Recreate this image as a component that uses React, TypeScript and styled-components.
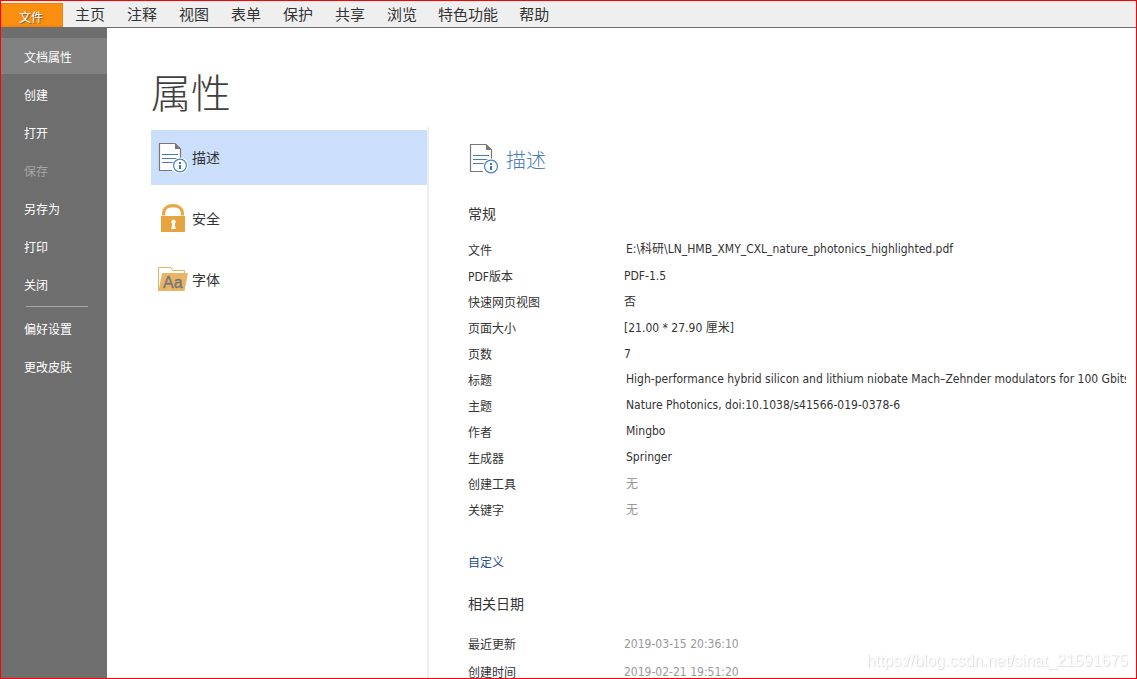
import React from "react";
import styled, { createGlobalStyle } from "styled-components";

const GlobalStyle = createGlobalStyle`
  *, *::before, *::after { box-sizing: border-box; }
  body {
    margin: 0;
    background: #fff;
    color: #333;
    font: 12px/16px "DejaVu Sans Condensed", "Noto Sans CJK SC", sans-serif;
  }
  button { font-family: inherit; border: 0; background: none; padding: 0; text-align: left; cursor: pointer; }
  h1, h2, h3, ul { margin: 0; padding: 0; font-weight: 400; list-style: none; }
`;

const Window = styled.div`
  height: 100vh;
  display: flex;
  flex-direction: column;
  overflow: hidden;
  border: 1px solid #f00;
`;

const MenuBar = styled.nav`
  flex: none;
  display: flex;
  align-items: stretch;
  height: 27px;
  padding-top: 2px;
  background: #efefef;
  border-bottom: 1px solid #6e6e6e;
`;

const FileTab = styled.button`
  width: 62px;
  margin-right: 1px;
  && {
    padding: 5px 0 0 17px;
    border: 1px solid #ee8208;
    background: #fa8e0f;
  }
  color: #fff;
  font-size: 12px;
  line-height: 16px;
  text-shadow: 1px 1px 1px #6b5a44;
`;

const MenuItem = styled.button<{ $wide?: boolean }>`
  && { padding: 0 ${(p) => (p.$wide ? 10 : 11)}px; }
  color: #333;
  font-size: 15px;
  line-height: 22px;
  white-space: nowrap;
`;

const Body = styled.div`
  flex: 1;
  min-height: 0;
  display: flex;
`;

const Sidebar = styled.nav`
  flex: none;
  width: 106px;
  padding-top: 10px;
  background: #6e6e6e;
  display: flex;
  flex-direction: column;
  gap: 2px;
`;

const SideItem = styled.button<{ $active?: boolean }>`
  height: 36px;
  && {
    padding: 4px 0 0 23px;
    background: ${(p) => (p.$active ? "#818181" : "transparent")};
  }
  color: #fff;
  font-size: 12px;
  line-height: 16px;
  &:disabled { color: #a6a6a6; cursor: default; }
`;

const SideRule = styled.hr`
  width: 62px;
  height: 1px;
  margin: 2px 0 1px 25px;
  border: 0;
  background: #a8a8a8;
`;

const Main = styled.main`
  flex: 1;
  min-width: 0;
  display: flex;
  flex-direction: column;
  padding-left: 44px;
`;

const Title = styled.h1`
  flex: none;
  && { padding-top: 38px; font-weight: 300; }
  height: 99px;
  color: #404040;
  font-size: 40px;
  line-height: 56px;
`;

const Panels = styled.div`
  flex: 1;
  min-height: 0;
  display: flex;
`;

const Categories = styled.ul`
  flex: none;
  width: 278px;
  && { padding-top: 3px; }
  border-right: 2px solid #eee;
  display: flex;
  flex-direction: column;
  gap: 6px;
`;

const Category = styled.button<{ $active?: boolean }>`
  width: 100%;
  height: 55px;
  display: flex;
  align-items: center;
  gap: 4px;
  && {
    padding-left: 7px;
    background: ${(p) => (p.$active ? "#cbdefa" : "transparent")};
  }
  color: #333;
  font-size: 14px;
  line-height: 20px;
`;

const Details = styled.section`
  flex: 1;
  min-width: 0;
  padding: 16px 10px 0 39px;
`;

const DetailHeading = styled.h2`
  display: flex;
  align-items: center;
  gap: 7px;
  height: 32px;
  && { padding-left: 1px; font-weight: 300; }
  color: #4a7db5;
  font-size: 20px;
  line-height: 28px;
`;

const HeadingText = styled.span`
  padding-top: 3px;
`;

const GroupHeading = styled.h3<{ $top: number; $bottom: number }>`
  && { margin: ${(p) => p.$top}px 0 ${(p) => p.$bottom}px; }
  font-size: 14px;
  line-height: 20px;
`;

const Table = styled.table`
  width: 100%;
  table-layout: fixed;
  border-collapse: collapse;
`;

const Row = styled.tr<{ $tall?: boolean }>`
  height: ${(p) => (p.$tall ? 28 : 26)}px;
`;

const Label = styled.th`
  width: 156px;
  padding: 2px 0 0;
  font-weight: 400;
  text-align: left;
`;

const Value = styled.td<{ $field?: boolean; $muted?: boolean }>`
  padding: 0 0 ${(p) => (p.$field && !p.$muted ? 2 : 0)}px ${(p) => (p.$field ? 2 : 0)}px;
  color: ${(p) => (p.$muted ? "#999" : "#333")};
  white-space: nowrap;
  overflow: hidden;
`;

const CustomLink = styled.a`
  display: block;
  width: max-content;
  margin-top: 32px;
  color: #1f4e8c;
  text-decoration: none;
`;

const Watermark = styled.div`
  position: fixed;
  right: 9px;
  bottom: 8px;
  color: #fff;
  font-family: "Liberation Sans", sans-serif;
  font-size: 16px;
  line-height: 20px;
  text-shadow: 1px 1px 1px #dcdcdc, 0 0 1px #e8e8e8;
  pointer-events: none;
`;

const DocumentIcon = () => (
  <svg width="30" height="32" viewBox="0 0 30 32" fill="none" aria-hidden="true">
    <path d="M1 1H17L23 7V28H1Z" fill="#fff" />
    <path d="M14 28.5H1.5V1.500H17L22.500 7V17" stroke="#777" strokeWidth="1.2" />
    <path d="M17 1L23 7H17Z" fill="#777" />
    <path d="M4 12.5H20M4 16.5H19M4 20.5H15" stroke="#4a7db8" />
    <circle cx="22" cy="23.500" r="8" fill="#fff" />
    <circle cx="22" cy="23.5" r="6.4" fill="#fff" stroke="#4a83bd" strokeWidth="1.2" />
    <path d="M21 20H23V22H21ZM21 23H23V27H21Z" fill="#3d76b5" />
  </svg>
);

const LockIcon = () => (
  <svg width="30" height="32" viewBox="0 0 30 32" fill="none" aria-hidden="true">
    <path d="M5.600 12.500V10.500C5.600 5.500 9.500 2.700 15 2.700S24.400 5.500 24.400 10.500V12.500" stroke="#e8a844" strokeWidth="3.200" />
    <rect x="3" y="13" width="24" height="16" fill="#e5a43e" />
    <path d="M15.500 16.500A2.300 2.300 0 0 1 17 20.500V23L18 26H13L14 23V20.500A2.300 2.300 0 0 1 15.500 16.500Z" fill="#fff" />
  </svg>
);

const FontFolderIcon = () => (
  <svg width="30" height="32" viewBox="0 0 30 32" aria-hidden="true">
    <path d="M0.500 27V3.500H13L14.500 6.500H26.500V11" fill="#fff" stroke="#e8b263" />
    <path d="M4 9H30L26.500 27H0.500Z" fill="#e9b464" />
    <text x="5" y="24" fill="#777" stroke="#777" strokeWidth="0.400" fontFamily="Liberation Sans, sans-serif" fontSize="16">Aa</text>
  </svg>
);

const menus = ["主页", "注释", "视图", "表单", "保护", "共享", "浏览", "特色功能", "帮助"];
const fileActions = ["文档属性", "创建", "打开", "保存", "另存为", "打印", "关闭"];
const settings = ["偏好设置", "更改皮肤"];

const categories = [
  { name: "描述", icon: <DocumentIcon /> },
  { name: "安全", icon: <LockIcon /> },
  { name: "字体", icon: <FontFolderIcon /> },
];

interface Property {
  label: string;
  value: string;
  field?: boolean;
  muted?: boolean;
}

const general: Property[] = [
  { label: "文件", value: "E:\\科研\\LN_HMB_XMY_CXL_nature_photonics_highlighted.pdf", field: true },
  { label: "PDF版本", value: "PDF-1.5" },
  { label: "快速网页视图", value: "否" },
  { label: "页面大小", value: "[21.00 * 27.90 厘米]" },
  { label: "页数", value: "7" },
  { label: "标题", value: "High-performance hybrid silicon and lithium niobate Mach–Zehnder modulators for 100 Gbits", field: true },
  { label: "主题", value: "Nature Photonics, doi:10.1038/s41566-019-0378-6", field: true },
  { label: "作者", value: "Mingbo", field: true },
  { label: "生成器", value: "Springer", field: true },
  { label: "创建工具", value: "无", field: true, muted: true },
  { label: "关键字", value: "无", field: true, muted: true },
];

const dates: Property[] = [
  { label: "最近更新", value: "2019-03-15 20:36:10", muted: true },
  { label: "创建时间", value: "2019-02-21 19:51:20", muted: true },
];

const PropertyTable = ({ items, tall }: { items: Property[]; tall?: boolean }) => (
  <Table>
    <tbody>
      {items.map((item) => (
        <Row key={item.label} $tall={tall}>
          <Label scope="row">{item.label}</Label>
          <Value $field={item.field} $muted={item.muted}>{item.value}</Value>
        </Row>
      ))}
    </tbody>
  </Table>
);

export default function App() {
  return (
    <Window lang="zh-CN">
      <GlobalStyle />
      <MenuBar>
        <FileTab>文件</FileTab>
        {menus.map((name) => (
          <MenuItem key={name} $wide={name.length > 2}>{name}</MenuItem>
        ))}
      </MenuBar>
      <Body>
        <Sidebar>
          {fileActions.map((name, i) => (
            <SideItem key={name} $active={i === 0} disabled={name === "保存"}>{name}</SideItem>
          ))}
          <SideRule />
          {settings.map((name) => (
            <SideItem key={name}>{name}</SideItem>
          ))}
        </Sidebar>
        <Main>
          <Title>属性</Title>
          <Panels>
            <Categories>
              {categories.map(({ name, icon }, i) => (
                <li key={name}>
                  <Category $active={i === 0}>{icon}{name}</Category>
                </li>
              ))}
            </Categories>
            <Details>
              <DetailHeading><DocumentIcon /><HeadingText>描述</HeadingText></DetailHeading>
              <GroupHeading $top={29} $bottom={13}>常规</GroupHeading>
              <PropertyTable items={general} />
              <CustomLink href="#custom">自定义</CustomLink>
              <GroupHeading $top={23} $bottom={16}>相关日期</GroupHeading>
              <PropertyTable items={dates} tall />
            </Details>
          </Panels>
        </Main>
      </Body>
      <Watermark>https://blog.csdn.net/sinat_21591675</Watermark>
    </Window>
  );
}
